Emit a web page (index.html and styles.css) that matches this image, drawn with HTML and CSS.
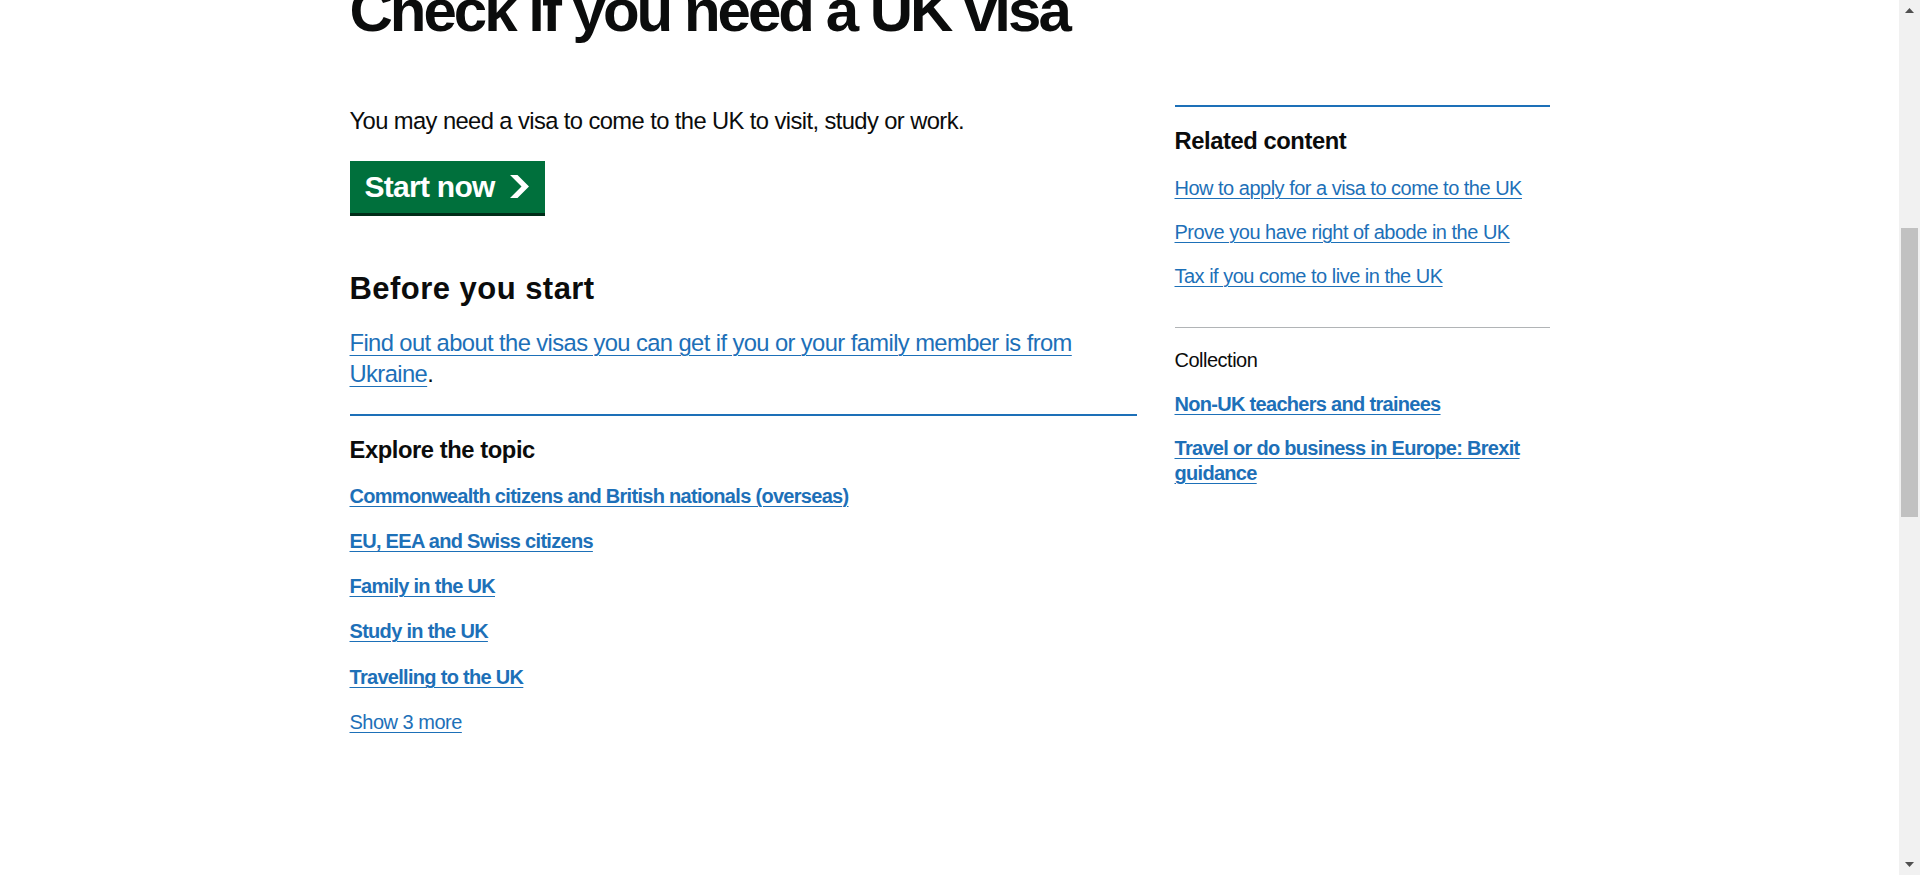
FILE: index.html
```html
<!DOCTYPE html>
<html lang="en">
<head>
<meta charset="utf-8">
<title>Check if you need a UK visa - GOV.UK</title>
<link rel="stylesheet" href="styles.css">
</head>
<body>
<div class="cookie-banner">
  <div class="width-container">
    <h2 class="heading-m">Cookies on GOV.UK</h2>
    <p class="body">We use some essential cookies to make this website work.</p>
    <p class="body">We’d like to set additional cookies to understand how you use GOV.UK, remember your settings and improve government services.</p>
    <div class="cookie-actions">
      <a class="button" href="#">Accept additional cookies</a>
      <a class="button" href="#">Reject additional cookies</a>
      <a class="link" href="#">View cookies</a>
    </div>
  </div>
</div>
<header class="site-header">
  <div class="width-container">
    <a class="header-logo" href="#">GOV.UK</a>
  </div>
</header>
<div class="width-container">
  <nav class="breadcrumbs" aria-label="Breadcrumb">
    <ol>
      <li><a href="#">Home</a></li>
      <li><a href="#">Entering and staying in the UK</a></li>
      <li><a href="#">Visas and immigration</a></li>
    </ol>
  </nav>
  <main class="main">
    <h1 class="page-title">Check if you need a UK visa</h1>
    <div class="layout">
      <div class="primary">
        <p class="body">You may need a visa to come to the UK to visit, study or work.</p>
        <div class="start">
          <a class="start-button" href="#">Start now<svg class="start-icon" viewBox="0 0 33 40" width="19" height="23" aria-hidden="true"><path fill="currentColor" d="M0 0h13l20 20-20 20H0l20-20z"/></svg></a>
        </div>
        <h2 class="heading-m">Before you start</h2>
        <p class="body"><a class="link" href="#">Find out about the visas you can get if you or your family member is from Ukraine</a>.</p>
        <section class="topics">
          <h2 class="heading-s">Explore the topic</h2>
          <ul class="link-list">
            <li><a class="link link-bold" href="#">Commonwealth citizens and British nationals (overseas)</a></li>
            <li><a class="link link-bold" href="#">EU, EEA and Swiss citizens</a></li>
            <li><a class="link link-bold" href="#">Family in the UK</a></li>
            <li><a class="link link-bold" href="#">Study in the UK</a></li>
            <li><a class="link link-bold" href="#">Travelling to the UK</a></li>
          </ul>
          <a class="link link-small" href="#">Show 3 more</a>
        </section>
      </div>
      <aside class="related">
        <h2 class="heading-s">Related content</h2>
        <ul class="link-list">
          <li><a class="link link-small" href="#">How to apply for a visa to come to the UK</a></li>
          <li><a class="link link-small" href="#">Prove you have right of abode in the UK</a></li>
          <li><a class="link link-small" href="#">Tax if you come to live in the UK</a></li>
        </ul>
        <div class="collection">
          <p class="collection-label">Collection</p>
          <ul class="link-list">
            <li><a class="link link-bold" href="#">Non-UK teachers and trainees</a></li>
            <li><a class="link link-bold" href="#">Travel or do business in Europe: Brexit guidance</a></li>
          </ul>
        </div>
      </aside>
    </div>
  </main>
</div>
<footer class="site-footer">
  <div class="width-container">
    <p class="footer-text">All content is available under the Open Government Licence v3.0, except where otherwise stated</p>
    <p class="footer-text">© Crown copyright</p>
  </div>
</footer>
<div class="scrollbar" aria-hidden="true">
  <span class="scroll-button"><svg width="9" height="5" viewBox="0 0 9 5"><path d="M0 5h9L4.5 0z" fill="#505050"/></svg></span>
  <span class="scroll-track"><span class="scroll-thumb"></span></span>
  <span class="scroll-button"><svg width="9" height="5" viewBox="0 0 9 5"><path d="M0 0h9L4.5 5z" fill="#505050"/></svg></span>
</div>
<script src="script.js"></script>
</body>
</html>
```

FILE: styles.css
```css
* {
  box-sizing: border-box;
}

html {
  background: #ffffff;
  scrollbar-width: none;
}

body {
  margin: 0;
  padding-right: 21px;
  font-family: "Liberation Sans", Arial, sans-serif;
  color: #0b0c0c;
}

.width-container {
  max-width: 1200px;
  margin: 0 auto;
}

/* window scrollbar drawn over the right edge */
.scrollbar {
  position: fixed;
  top: 0;
  right: 0;
  width: 21px;
  height: 100vh;
  background: #f1f1f1;
  display: flex;
  flex-direction: column;
}

.scroll-button {
  flex: none;
  height: 21px;
  display: flex;
  align-items: center;
  justify-content: center;
}

.scroll-track {
  flex: 1;
  padding: 0 2px;
}

.scroll-thumb {
  display: block;
  margin-top: 207px;
  height: 289px;
  background: #c1c1c1;
}

/* cookie banner / header (above the fold) */
.cookie-banner {
  background: #f3f2f1;
  padding: 25px 0 12px;
}

.cookie-actions {
  display: flex;
  align-items: center;
  gap: 18px;
  padding-bottom: 25px;
}

.button {
  display: inline-block;
  background: #00703c;
  color: #ffffff;
  font-size: 23.75px;
  line-height: 23.75px;
  padding: 10px 12.5px 8.75px;
  box-shadow: 0 2.5px 0 #002d18;
  text-decoration: none;
}

.site-header {
  background: #0b0c0c;
  border-bottom: 12.5px solid #1d70b8;
  padding: 12.5px 0 10px;
}

.header-logo {
  display: inline-block;
  color: #ffffff;
  font-weight: 700;
  font-size: 37.5px;
  line-height: 50px;
  text-decoration: none;
}

.breadcrumbs ol {
  list-style: none;
  margin: 0;
  padding: 18.75px 0 0;
  display: flex;
  gap: 30px;
  font-size: 20px;
  line-height: 25px;
}

.breadcrumbs a {
  color: #0b0c0c;
}

.main {
  padding: 50px 0 250px;
}

/* typography */
.page-title {
  margin: 0 0 62.5px;
  font-size: 60px;
  line-height: 62.5px;
  font-weight: 700;
  letter-spacing: -0.05em;
}

.heading-m {
  margin: 0 0 19.5px;
  font-size: 31px;
  line-height: 37.5px;
  font-weight: 700;
  letter-spacing: 0.015em;
}

.heading-s {
  margin: 0 0 19.3px;
  font-size: 23.75px;
  line-height: 31.25px;
  font-weight: 700;
  letter-spacing: -0.018em;
}

.body {
  margin: 0 0 25px;
  font-size: 23.75px;
  line-height: 31.25px;
  letter-spacing: -0.025em;
}

.link {
  color: #1d70b8;
  text-decoration: underline;
  text-decoration-thickness: 1px;
  text-underline-offset: 0.16em;
}

.link-small {
  font-size: 20px;
  line-height: 25px;
  letter-spacing: -0.025em;
}

.link-bold {
  font-size: 20px;
  line-height: 25px;
  font-weight: 700;
  letter-spacing: -0.035em;
}

/* page layout */
.layout {
  display: grid;
  grid-template-columns: 787px 375px;
  column-gap: 38px;
  align-items: start;
}

.start {
  display: flex;
  margin-bottom: 57px;
}

.start-button {
  display: flex;
  align-items: center;
  background: #00703c;
  color: #ffffff;
  font-size: 30px;
  line-height: 30px;
  font-weight: 700;
  letter-spacing: -0.024em;
  padding: 11px 16px 11px 15px;
  box-shadow: 0 3px 0 #002d18;
  text-decoration: none;
}

.start-icon {
  margin-left: 15px;
  flex: none;
}

.topics {
  border-top: 2px solid #1d70b8;
  padding-top: 17.5px;
}

.link-list {
  list-style: none;
  margin: 0;
  padding: 0;
}

.link-list li {
  font-size: 20px;
  line-height: 25px;
}

.topics .link-list li {
  margin-bottom: 20px;
}

.topics .link-list li:last-child {
  margin-top: 21px;
}

.related {
  border-top: 2px solid #1d70b8;
  padding-top: 18px;
}

.related .heading-s {
  margin-bottom: 20.3px;
}

.related .link-list li + li {
  margin-top: 19px;
}

.collection {
  margin-top: 38px;
  border-top: 1px solid #b1b4b6;
  padding-top: 19.6px;
}

.collection-label {
  margin: 0 0 19px;
  font-size: 20px;
  line-height: 25px;
  letter-spacing: -0.025em;
}

/* footer (below the fold) */
.site-footer {
  background: #f3f2f1;
  border-top: 1.25px solid #b1b4b6;
  padding: 50px 0 31px;
  min-height: 600px;
}

.footer-text {
  margin: 0 0 20px;
  font-size: 20px;
  line-height: 25px;
}
```

FILE: script.js
```js
(function () {
  if ('scrollRestoration' in history) {
    history.scrollRestoration = 'manual';
  }
  function place() {
    var row = document.querySelector('.layout');
    var top = row.getBoundingClientRect().top + window.scrollY;
    window.scrollTo(0, Math.round(top - 105));
  }
  place();
  window.addEventListener('load', place);
})();
```
